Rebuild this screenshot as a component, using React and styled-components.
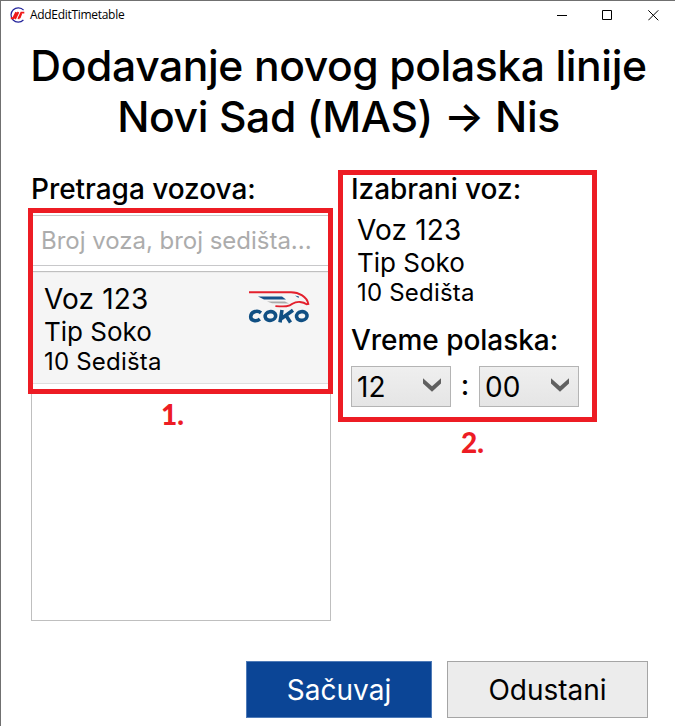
import React from "react";
import styled, { createGlobalStyle } from "styled-components";

const Global = createGlobalStyle`
  * { box-sizing: border-box; }
  body { margin: 0; background: #fff; overflow: hidden; }
`;

const Window = styled.main`
  width: 675px;
  height: 726px;
  position: relative;
  border-left: 1px solid #707070;
  border-top: 1px solid #707070;
  background: #fff;
  color: #000;
  font-family: Inter, sans-serif;
  display: flex;
  flex-direction: column;
  overflow: hidden;
`;

const TitleBar = styled.header`
  height: 28px;
  flex: none;
  display: flex;
  align-items: center;
  padding: 0 16px 0 8px;
`;

const Caption = styled.span`
  flex: 1;
  margin-left: 5px;
  font: 12px/16px "Open Sans", sans-serif;
  letter-spacing: -0.3px;
`;

const Controls = styled.div`
  display: flex;
  gap: 35px;
  svg { display: block; }
`;

const Heading = styled.h1`
  margin: 11px 0 0 1px;
  height: 102px;
  font-size: 42.67px;
  line-height: 51px;
  font-weight: 500;
  text-align: center;
  white-space: nowrap;
  letter-spacing: -0.42px;
`;

const Columns = styled.div`
  display: grid;
  grid-template-columns: 300px 1fr;
  column-gap: 20px;
  padding-left: 30px;
  margin-top: 30px;
  height: 449px;
`;

const Column = styled.section`
  display: flex;
  flex-direction: column;
  align-items: flex-start;
  min-width: 0;
`;

const Label = styled.div`
  height: 34px;
  font-size: 28px;
  line-height: 34px;
  font-weight: 500;
  white-space: nowrap;
  letter-spacing: -0.04px;
  margin-top: ${(p) => p.$top || 0}px;
`;

const Search = styled.input`
  width: 300px;
  height: 51px;
  margin-top: 9px;
  padding: 0 9px;
  border: 1px solid #c8c8ca;
  border-radius: 0;
  outline: none;
  font: 400 24px Inter, sans-serif;
  letter-spacing: -0.02px;
  &::placeholder { color: #acacac; opacity: 1; }
`;

const List = styled.div`
  width: 300px;
  height: 350px;
  margin-top: 5px;
  border: 1px solid #bfbfbf;
`;

const ListItem = styled.div`
  height: 112px;
  background: #f5f5f5;
  border: 1px solid #dedede;
  border-top-color: #ececec;
  display: flex;
  justify-content: space-between;
  padding: 9px 18px 0 11px;
`;

const Train = styled.div`
  margin: ${(p) => p.$margin || 0};
`;

const TrainLine = styled.div`
  font-size: ${(p) => p.$size}px;
  line-height: ${(p) => p.$height}px;
  letter-spacing: ${(p) => p.$spacing || 0}px;
  white-space: nowrap;
`;

const Logo = styled.svg`
  width: 64px;
  height: 36px;
  margin-top: 7px;
`;

const TimeRow = styled.div`
  display: flex;
  align-items: center;
  margin-top: 9px;
`;

const Select = styled.button`
  width: 100px;
  height: 41px;
  padding: 0 8px 0 5px;
  border: 1px solid #b4b4b4;
  background: linear-gradient(#efefef, #e5e5e5);
  color: #000;
  font: 400 28px Inter, sans-serif;
  display: flex;
  align-items: center;
  justify-content: space-between;
  svg { margin-bottom: 3px; }
`;

const Colon = styled.span`
  width: 28px;
  font-size: 28px;
  font-weight: 500;
  line-height: 34px;
  text-align: center;
  padding-bottom: 4px;
`;

const Actions = styled.footer`
  display: flex;
  justify-content: flex-end;
  gap: 15px;
  margin-top: 40px;
  padding-right: 27px;
`;

const Action = styled.button`
  width: ${(p) => (p.$primary ? 186 : 201)}px;
  height: 57px;
  padding: 0;
  border: 1px solid ${(p) => (p.$primary ? "#4f7bb8" : "#a5a5a5")};
  background: ${(p) => (p.$primary ? "#0b4596" : "#ececec")};
  color: ${(p) => (p.$primary ? "#fff" : "#000")};
  font: 400 28px Inter, sans-serif;
`;

const Callout = styled.div`
  position: absolute;
  left: ${(p) => p.$x}px;
  top: ${(p) => p.$y}px;
  width: ${(p) => p.$w}px;
  height: ${(p) => p.$h}px;
  border: 5px solid #ed1c24;
`;

const CalloutNumber = styled.div`
  position: absolute;
  left: ${(p) => p.$x}px;
  top: ${(p) => p.$y}px;
  color: #ed1c24;
  font: 900 28px/32px Lato, sans-serif;
`;

const AppIcon = () => (
  <svg width="16" height="16" viewBox="0 0 16 16">
    <path d="M14.6 3.2A7.2 7.2 0 1 0 14.4 13" fill="none" stroke="#25259c" strokeWidth="1.2" />
    <path d="M1.8 11.2h2.4L7.2 5.2M6 12l3.4-7M9.3 12l3-6.4h3M12.2 6.6L10.6 11" fill="none" stroke="#f01818" strokeWidth="1.9" />
  </svg>
);

const SokoLogo = () => (
  <Logo viewBox="0 0 64 36">
    <path d="M2 3.2H44c8 .1 16 4.4 17.3 11.8l-1.7.3c-3.2-2.7-9.7-3.4-14.2-.5-3.3 2.8-7 3-17 2.3" fill="none" stroke="#e3202d" strokeWidth="1.9" />
    <path d="M11 7.6h24l4 2.9H17z" fill="#17528a" />
    <path d="M20 12.5h18l4 2-17-.3z" fill="#aaa" />
    <path d="M48 6.6l4 1-.5 1.5z" fill="#17528a" />
    <g fill="none" stroke="#104f83" strokeWidth="3.6">
      <path d="M14 23.8c-4-3.2-10.2-.8-10.3 4 0 4.2 5.6 5 9.2 2.3" />
      <ellipse cx="23.4" cy="27" rx="5.3" ry="4.3" transform="rotate(-10 23.4 27)" />
      <path d="M35 21l-2 12.4M46 21.3L34.5 29.5M39 26.6l4.5 6.8" />
      <ellipse cx="54.8" cy="27" rx="5.3" ry="4.3" transform="rotate(-10 54.8 27)" />
    </g>
  </Logo>
);

const Chevron = () => (
  <svg width="20" height="16" viewBox="0 0 20 16">
    <path d="M1 1.2L10 9.2l9-8v5.2L10 14.8 1 6.4z" fill="#606060" />
  </svg>
);

const TrainInfo = ({ margin }) => (
  <Train $margin={margin}>
    <TrainLine $size={28} $height={34} $spacing={0.15}>Voz 123</TrainLine>
    <TrainLine $size={26} $height={31}>Tip Soko</TrainLine>
    <TrainLine $size={24} $height={29} $spacing={0.2}>10 Sedišta</TrainLine>
  </Train>
);

export default function App() {
  return (
    <>
      <Global />
      <Window>
        <TitleBar>
          <AppIcon />
          <Caption>AddEditTimetable</Caption>
          <Controls>
            <svg width="11" height="11"><path d="M1 5.5h10" stroke="#000" /></svg>
            <svg width="11" height="11"><path d="M.5.5h9v9h-9z" fill="none" stroke="#000" /></svg>
            <svg width="11" height="11"><path d="M.3.3l10 10m0-10l-10 10" stroke="#000" /></svg>
          </Controls>
        </TitleBar>
        <Heading>
          Dodavanje novog polaska linije<br />Novi Sad (MAS) → Nis
        </Heading>
        <Columns>
          <Column>
            <Label>Pretraga vozova:</Label>
            <Search placeholder="Broj voza, broj sedišta..." />
            <List>
              <ListItem>
                <TrainInfo />
                <SokoLogo />
              </ListItem>
            </List>
          </Column>
          <Column>
            <Label>Izabrani voz:</Label>
            <TrainInfo margin="7px 0 0 6px" />
            <Label $top={16}>Vreme polaska:</Label>
            <TimeRow>
              <Select>12<Chevron /></Select>
              <Colon>:</Colon>
              <Select>00<Chevron /></Select>
            </TimeRow>
          </Column>
        </Columns>
        <Actions>
          <Action $primary>Sačuvaj</Action>
          <Action>Odustani</Action>
        </Actions>
        <Callout $x={27} $y={207} $w={305} $h={186} />
        <Callout $x={337} $y={169} $w={259} $h={252} />
        <CalloutNumber $x={160} $y={397}>1.</CalloutNumber>
        <CalloutNumber $x={460} $y={425}>2.</CalloutNumber>
      </Window>
    </>
  );
}
